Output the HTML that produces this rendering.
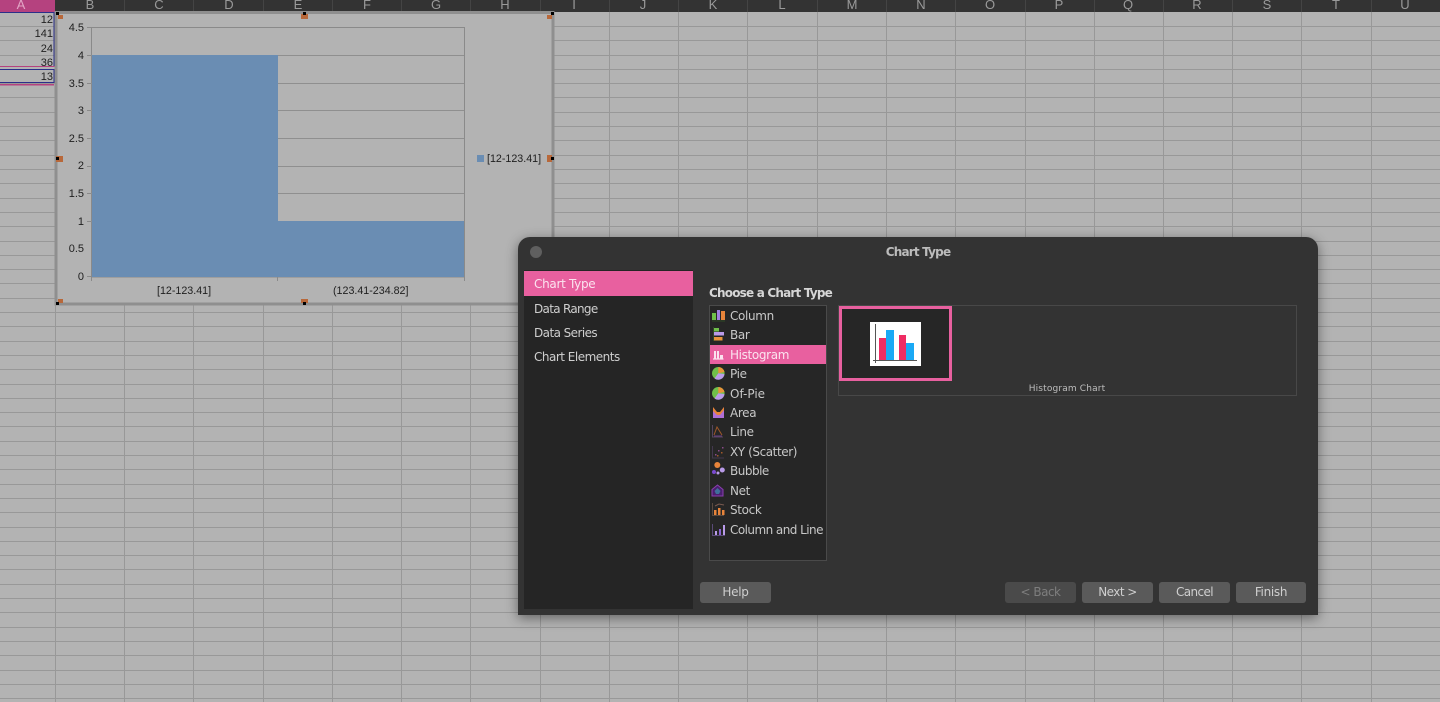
<!DOCTYPE html>
<html><head><meta charset="utf-8"><style>
html,body{margin:0;padding:0;width:1440px;height:702px;overflow:hidden;background:#b3b3b3}
body{position:relative;font-family:"Liberation Sans",sans-serif}
.a{position:absolute}
.hd{position:absolute;top:-2px;font-size:13px;color:#9a9a9a;width:40px;text-align:center;line-height:14px}
.n{position:absolute;right:1387px;font-size:11px;color:#222;line-height:12px}
.t{position:absolute;font-size:10.7px;color:#1e1e1e;line-height:12px;white-space:nowrap}
.y{position:absolute;width:30px;left:54px;text-align:right;font-size:11px;color:#1e1e1e;line-height:12px}
.ui{position:absolute;font-family:"DejaVu Sans",sans-serif;font-size:12px;letter-spacing:-.3px;color:#cfcfcf;line-height:16px;white-space:nowrap}
.li{position:absolute;left:730px;font-family:"DejaVu Sans",sans-serif;font-size:12px;letter-spacing:-.35px;color:#c8c8c8;line-height:16px;white-space:nowrap}
.btn{position:absolute;top:582px;height:21px;width:70px;border-radius:3px;background:#5a5a5a;color:#cfcfcf;font-family:"DejaVu Sans",sans-serif;font-size:12px;letter-spacing:-.3px;text-align:center;line-height:21px}
svg{position:absolute}
</style></head><body>
<svg style="left:0;top:0" width="1440" height="702">
<rect width="1440" height="702" fill="#b3b3b3"/>
<path shape-rendering="crispEdges" stroke="#989898" stroke-width="1" fill="none" d="M0 26.500H1440M0 40.500H1440M0 55.500H1440M0 69.500H1440M0 83.500H1440M0 97.500H1440M0 112.500H1440M0 126.500H1440M0 140.500H1440M0 155.500H1440M0 169.500H1440M0 183.500H1440M0 198.500H1440M0 212.500H1440M0 226.500H1440M0 241.500H1440M0 255.500H1440M0 269.500H1440M0 283.500H1440M0 298.500H1440M0 312.500H1440M0 326.500H1440M0 341.500H1440M0 355.500H1440M0 369.500H1440M0 384.500H1440M0 398.500H1440M0 412.500H1440M0 426.500H1440M0 441.500H1440M0 455.500H1440M0 469.500H1440M0 484.500H1440M0 498.500H1440M0 512.500H1440M0 527.500H1440M0 541.500H1440M0 555.500H1440M0 569.500H1440M0 584.500H1440M0 598.500H1440M0 612.500H1440M0 627.500H1440M0 641.500H1440M0 655.500H1440M0 670.500H1440M0 684.500H1440M0 698.500H1440
M55.500 0V702M124.500 0V702M193.500 0V702M263.500 0V702M332.500 0V702M401.500 0V702M470.500 0V702M540.500 0V702M609.500 0V702M678.500 0V702M747.500 0V702M817.500 0V702M886.500 0V702M955.500 0V702M1025.500 0V702M1094.500 0V702M1163.500 0V702M1232.500 0V702M1301.500 0V702M1371.500 0V702"/>
<rect width="1440" height="12" fill="#333"/>
<rect width="55" height="12" fill="#b5427f"/>
<g fill="#444"><rect x="124" width="1" height="12"/><rect x="193" width="1" height="12"/><rect x="263" width="1" height="12"/><rect x="332" width="1" height="12"/><rect x="401" width="1" height="12"/><rect x="470" width="1" height="12"/><rect x="540" width="1" height="12"/><rect x="609" width="1" height="12"/><rect x="678" width="1" height="12"/><rect x="747" width="1" height="12"/><rect x="817" width="1" height="12"/><rect x="886" width="1" height="12"/><rect x="955" width="1" height="12"/><rect x="1025" width="1" height="12"/><rect x="1094" width="1" height="12"/><rect x="1163" width="1" height="12"/><rect x="1232" width="1" height="12"/><rect x="1301" width="1" height="12"/><rect x="1371" width="1" height="12"/></g>
<!-- cell range highlights -->
<rect x="-2" y="12.500" width="56" height="54" fill="none" stroke="#2b2f8a" stroke-width="1"/>
<rect x="-2" y="69.500" width="56" height="13" fill="none" stroke="#2b2f8a" stroke-width="1"/>
<rect x="0" y="66" width="55" height="1" fill="#b5427f"/>
<rect x="0" y="84" width="54" height="1.500" fill="#b5427f"/>
<!-- chart -->
<rect x="56" y="13" width="497" height="291" fill="#b3b3b3"/>
<rect x="56" y="12.500" width="497" height="291.500" fill="none" stroke="#8f8f8f" stroke-width="3"/>
<rect x="91.500" y="27.500" width="373" height="249.500" fill="#b3b3b3" stroke="#8a8a8a"/>
<g fill="#8f8f8f"><rect x="91" y="55" width="373" height="1"/><rect x="91" y="83" width="373" height="1"/><rect x="91" y="110" width="373" height="1"/><rect x="91" y="138" width="373" height="1"/><rect x="91" y="166" width="373" height="1"/><rect x="91" y="193" width="373" height="1"/><rect x="91" y="221" width="373" height="1"/></g>
<g fill="#8a8a8a"><rect x="87" y="27" width="4" height="1"/><rect x="87" y="55" width="4" height="1"/><rect x="87" y="83" width="4" height="1"/><rect x="87" y="110" width="4" height="1"/><rect x="87" y="138" width="4" height="1"/><rect x="87" y="166" width="4" height="1"/><rect x="87" y="193" width="4" height="1"/><rect x="87" y="221" width="4" height="1"/><rect x="87" y="276" width="4" height="1"/><rect x="91" y="277" width="1" height="4"/><rect x="277" y="277" width="1" height="4"/><rect x="464" y="277" width="1" height="4"/></g>
<rect x="92" y="55" width="186" height="222" fill="#6a8db3"/>
<rect x="278" y="221" width="186" height="56" fill="#6a8db3"/>
<rect x="477" y="155" width="7" height="7" fill="#6a8db3"/>
<!-- handles -->
<g fill="#b8683a"><rect x="58" y="15" width="5" height="4"/><rect x="301" y="14" width="7" height="5"/><rect x="547" y="15" width="5" height="4"/><rect x="56" y="156" width="7" height="6"/><rect x="547" y="155" width="5" height="7"/><rect x="58" y="299" width="5" height="4"/><rect x="301" y="299" width="7" height="4"/><rect x="547" y="299" width="5" height="4"/></g>
<g fill="#000"><rect x="56" y="12" width="3" height="3"/><rect x="303" y="12" width="3" height="3"/><rect x="551" y="12" width="3" height="3"/><rect x="56" y="157" width="3" height="3"/><rect x="551" y="157" width="3" height="3"/><rect x="56" y="302" width="3" height="3"/><rect x="303" y="302" width="3" height="3"/><rect x="551" y="302" width="3" height="3"/></g>
</svg>

<div class="hd" style="left:0;color:#e2a5c6;width:42px">A</div>
<div class="hd" style="left:70px">B</div><div class="hd" style="left:139px">C</div><div class="hd" style="left:209px">D</div><div class="hd" style="left:278px">E</div><div class="hd" style="left:347px">F</div><div class="hd" style="left:416px">G</div><div class="hd" style="left:485px">H</div><div class="hd" style="left:554px">I</div><div class="hd" style="left:623px">J</div><div class="hd" style="left:693px">K</div><div class="hd" style="left:762px">L</div><div class="hd" style="left:832px">M</div><div class="hd" style="left:901px">N</div><div class="hd" style="left:970px">O</div><div class="hd" style="left:1039px">P</div><div class="hd" style="left:1108px">Q</div><div class="hd" style="left:1177px">R</div><div class="hd" style="left:1247px">S</div><div class="hd" style="left:1316px">T</div><div class="hd" style="left:1385px">U</div>

<div class="n" style="top:14px">12</div><div class="n" style="top:28px">141</div><div class="n" style="top:43px">24</div><div class="n" style="top:57px">36</div><div class="n" style="top:71px">13</div>

<div class="y" style="top:22px">4.5</div><div class="y" style="top:50px">4</div><div class="y" style="top:78px">3.5</div><div class="y" style="top:105px">3</div><div class="y" style="top:133px">2.5</div><div class="y" style="top:160px">2</div><div class="y" style="top:188px">1.5</div><div class="y" style="top:216px">1</div><div class="y" style="top:243px">0.5</div><div class="y" style="top:271px">0</div>
<div class="t" style="left:157px;top:285px">[12-123.41]</div>
<div class="t" style="left:333px;top:285px">(123.41-234.82]</div>
<div class="t" style="left:487px;top:153px">[12-123.41]</div>

<!-- dialog -->
<div class="a" style="left:518px;top:237px;width:800px;height:378px;background:#333;border-radius:12px 12px 0 0;box-shadow:0 3px 12px rgba(0,0,0,.45)"></div>
<div class="a" style="left:530px;top:246px;width:12px;height:12px;border-radius:50%;background:#5f5f5f"></div>
<div class="ui" style="left:518px;width:800px;top:244px;text-align:center;font-weight:bold;font-size:12px;letter-spacing:-.8px;color:#bcbcbc">Chart Type</div>
<div class="a" style="left:524px;top:270px;width:169px;height:339px;background:#252525"></div>
<div class="a" style="left:524px;top:271px;width:169px;height:25px;background:#e8609f"></div>
<div class="ui" style="left:534px;top:276px;color:#fbe3ef">Chart Type</div>
<div class="ui" style="left:534px;top:301px;letter-spacing:-.7px">Data Range</div>
<div class="ui" style="left:534px;top:325px;letter-spacing:-.57px">Data Series</div>
<div class="ui" style="left:534px;top:349px;letter-spacing:-.5px">Chart Elements</div>

<div class="ui" style="left:709px;top:285px;font-weight:bold;color:#d6d6d6;letter-spacing:-.8px">Choose a Chart Type</div>

<div class="a" style="left:709px;top:305px;width:116px;height:254px;background:#262626;border:1px solid #4a4a4a"></div>
<div class="a" style="left:710px;top:345px;width:116px;height:19px;background:#e8609f"></div>

<svg style="left:711px;top:307px" width="16" height="240" viewBox="0 0 16 240">
<!-- column -->
<path d="M1 14H14" stroke="#2f4a24"/><rect x="1" y="6" width="4" height="7" fill="#6fc04a"/><rect x="6" y="3" width="3" height="10" fill="#a07fe0"/><rect x="10" y="4" width="4" height="9" fill="#e8843a"/>
<!-- bar -->
<path d="M2.500 20V34" stroke="#2f4a24"/><rect x="3" y="21" width="5" height="3.500" fill="#6fc04a"/><rect x="3" y="25" width="10" height="3.500" fill="#b99be8"/><rect x="3" y="30" width="8.500" height="3.500" fill="#e8943a"/>
<!-- histogram -->
<path d="M2 52H12.500" stroke="#fff" fill="none"/><rect x="3" y="44" width="2" height="8" fill="#fbe3ef"/><rect x="6" y="44" width="2" height="8" fill="#fbe3ef"/><rect x="9" y="48" width="3" height="4" fill="#fbe3ef"/>
<!-- pie -->
<circle cx="7.300" cy="66.300" r="6.300" fill="#6fc04a"/><path d="M7.300 66.300V60A6.300 6.300 0 0 1 13.500 65Z" fill="#e8943a"/><path d="M7.300 66.300L13.500 67A6.300 6.300 0 0 1 3.500 71.500Z" fill="#b99be8"/>
<circle cx="7.300" cy="86.300" r="6.300" fill="#6fc04a"/><path d="M7.300 86.300V80A6.300 6.300 0 0 1 13.500 85Z" fill="#e8943a"/><path d="M7.300 86.300L13.500 87A6.300 6.300 0 0 1 3.500 91.500Z" fill="#b99be8"/>
<!-- area -->
<path d="M2 111V102L6 106L9 106L13 100V111Z" fill="#b06fd8"/><path d="M2 100L6 105L9 105L13 100V103L9 108L6 108L2 104Z" fill="#e8843a"/>
<!-- line -->
<path d="M1.500 118V130H12" stroke="#55465f" fill="none"/><path d="M3 128L6 120L11 128" stroke="#a0582a" fill="none"/><path d="M3 129H11" stroke="#6a3f80"/>
<!-- xy -->
<path d="M1.500 139V151H13" stroke="#43384e" fill="none"/><g fill="#8a4a8a"><rect x="4" y="147" width="1.500" height="1.500"/><rect x="7" y="143" width="1.500" height="1.500"/><rect x="11" y="140" width="1.500" height="1.500"/></g><g fill="#a0582a"><rect x="6" y="148" width="1.500" height="1.500"/><rect x="10" y="145" width="1.500" height="1.500"/></g>
<!-- bubble -->
<circle cx="6.300" cy="158" r="3" fill="#e8843a"/><circle cx="11.300" cy="163" r="2.500" fill="#b99be8"/><circle cx="3" cy="165" r="2" fill="#7a4ad0"/><circle cx="7" cy="166" r="1.500" fill="#b99be8"/>
<!-- net -->
<path d="M6.500 178L12 182.500V189H1V182.500Z" fill="#4a1f6e" stroke="#8a3fb0"/><path d="M6.500 181L9.500 184L8 187H5L3.500 184Z" fill="#3f6f9a"/>
<!-- stock -->
<path d="M1.500 196V208.500H13" stroke="#5a4a40" fill="none"/><rect x="3" y="203" width="2.500" height="5" fill="#e8843a"/><rect x="7" y="201" width="2.500" height="7" fill="#e8843a"/><rect x="11" y="203" width="2.500" height="5" fill="#e8843a"/><path d="M4 199L8 197L13 198" stroke="#7a5a50" fill="none"/>
<!-- col line -->
<path d="M1.500 217V228.500H14" stroke="#5a4a78" fill="none"/><rect x="4" y="224" width="2" height="4" fill="#b99be8"/><rect x="8" y="222" width="2" height="6" fill="#8a63d2"/><rect x="12" y="218" width="2" height="10" fill="#b99be8"/>
</svg>

<div class="li" style="top:308px">Column</div>
<div class="li" style="top:327px">Bar</div>
<div class="li" style="top:347px;color:#fbe3ef">Histogram</div>
<div class="li" style="top:366px">Pie</div>
<div class="li" style="top:386px;letter-spacing:0">Of-Pie</div>
<div class="li" style="top:405px">Area</div>
<div class="li" style="top:424px">Line</div>
<div class="li" style="top:444px;letter-spacing:-.42px">XY (Scatter)</div>
<div class="li" style="top:463px;letter-spacing:-.5px">Bubble</div>
<div class="li" style="top:483px">Net</div>
<div class="li" style="top:502px">Stock</div>
<div class="li" style="top:522px;letter-spacing:-.55px">Column and Line</div>

<div class="a" style="left:838px;top:305px;width:457px;height:89px;border:1px solid #484848"></div>
<div class="a" style="left:839px;top:306px;width:107px;height:69px;background:#262626;border:3px solid #e8609f"></div>
<svg style="left:870px;top:322px" width="51" height="44">
<rect width="51" height="44" fill="#fff"/>
<rect x="9" y="16" width="7" height="22" fill="#ef2c63"/><rect x="16" y="8" width="8" height="30" fill="#1aa9f5"/><rect x="29" y="13" width="7" height="25" fill="#ef2c63"/><rect x="36" y="21" width="8" height="17" fill="#1aa9f5"/>
<rect x="5" y="2" width="1" height="39" fill="#555"/><rect x="3" y="38" width="44" height="1" fill="#555"/>
</svg>
<div class="ui" style="left:838px;width:458px;top:381px;text-align:center;font-size:9px;letter-spacing:.15px;color:#bdbdbd">Histogram Chart</div>

<div class="btn" style="left:700px;width:71px">Help</div>
<div class="btn" style="left:1005px;background:#4a4a4a;color:#7e7e7e;width:71px;letter-spacing:-.5px">&lt; Back</div>
<div class="btn" style="left:1082px;width:71px;letter-spacing:-.55px">Next &gt;</div>
<div class="btn" style="left:1159px;width:71px;letter-spacing:-.6px">Cancel</div>
<div class="btn" style="left:1236px;width:70px">Finish</div>
</body></html>
